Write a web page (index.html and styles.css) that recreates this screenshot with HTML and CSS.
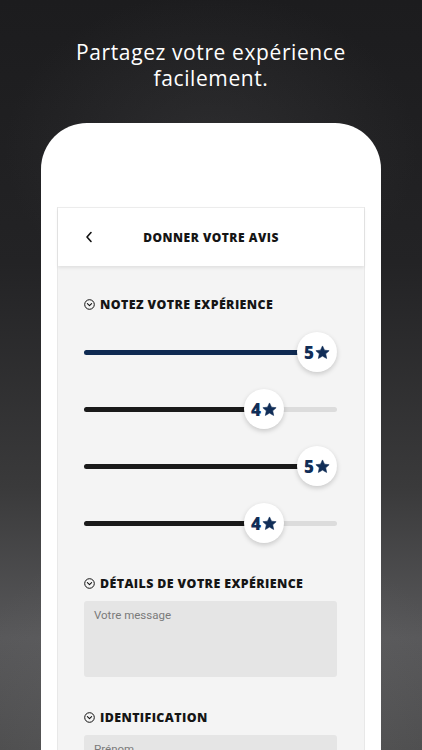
FILE: index.html
```html
<!DOCTYPE html>
<html lang="fr">
<head>
<meta charset="utf-8">
<title>Donner votre avis</title>
<link rel="stylesheet" href="styles.css">
</head>
<body>
<h1 class="tagline">Partagez votre expérience<br>facilement.</h1>
<div class="phone">
  <div class="screen">
    <header class="topbar">
      <svg class="back" width="8" height="12" viewBox="0 0 8 12"><path d="M6 1.5 L2 6 L6 10.5" fill="none" stroke="#111" stroke-width="1.6" stroke-linecap="round" stroke-linejoin="round"/></svg>
      <span class="topbar-title">DONNER VOTRE AVIS</span>
    </header>
    <main class="content">
      <h2 class="section-title first">
        <svg class="sec-icon" width="11" height="11" viewBox="0 0 11 11"><circle cx="5.5" cy="5.5" r="4.8" fill="none" stroke="#111" stroke-width="1"/><path d="M3.4 4.7 L5.5 6.7 L7.6 4.7" fill="none" stroke="#111" stroke-width="1.1" stroke-linecap="round" stroke-linejoin="round"/></svg>
        NOTEZ VOTRE EXPÉRIENCE
      </h2>
      <div class="sliders">
        <div class="slider">
          <div class="track"></div>
          <div class="fill fill-navy" style="width:233px"></div>
          <div class="thumb" style="left:213px"><span class="num">5</span><svg class="star" width="15" height="15" viewBox="0 0 24 24"><path d="M12 1.5 L15.2 8.3 L22.6 9.1 L17.1 14.1 L18.6 21.5 L12 17.7 L5.4 21.5 L6.9 14.1 L1.4 9.1 L8.8 8.3 Z" fill="#102d57" stroke="#102d57" stroke-width="1" stroke-linejoin="round"/></svg></div>
        </div>
        <div class="slider">
          <div class="track"></div>
          <div class="fill" style="width:180px"></div>
          <div class="thumb" style="left:160px"><span class="num">4</span><svg class="star" width="15" height="15" viewBox="0 0 24 24"><path d="M12 1.5 L15.2 8.3 L22.6 9.1 L17.1 14.1 L18.6 21.5 L12 17.7 L5.4 21.5 L6.9 14.1 L1.4 9.1 L8.8 8.3 Z" fill="#102d57" stroke="#102d57" stroke-width="1" stroke-linejoin="round"/></svg></div>
        </div>
        <div class="slider">
          <div class="track"></div>
          <div class="fill" style="width:233px"></div>
          <div class="thumb" style="left:213px"><span class="num">5</span><svg class="star" width="15" height="15" viewBox="0 0 24 24"><path d="M12 1.5 L15.2 8.3 L22.6 9.1 L17.1 14.1 L18.6 21.5 L12 17.7 L5.4 21.5 L6.9 14.1 L1.4 9.1 L8.8 8.3 Z" fill="#102d57" stroke="#102d57" stroke-width="1" stroke-linejoin="round"/></svg></div>
        </div>
        <div class="slider">
          <div class="track"></div>
          <div class="fill" style="width:180px"></div>
          <div class="thumb" style="left:160px"><span class="num">4</span><svg class="star" width="15" height="15" viewBox="0 0 24 24"><path d="M12 1.5 L15.2 8.3 L22.6 9.1 L17.1 14.1 L18.6 21.5 L12 17.7 L5.4 21.5 L6.9 14.1 L1.4 9.1 L8.8 8.3 Z" fill="#102d57" stroke="#102d57" stroke-width="1" stroke-linejoin="round"/></svg></div>
        </div>
      </div>
      <h2 class="section-title">
        <svg class="sec-icon" width="11" height="11" viewBox="0 0 11 11"><circle cx="5.5" cy="5.5" r="4.8" fill="none" stroke="#111" stroke-width="1"/><path d="M3.4 4.7 L5.5 6.7 L7.6 4.7" fill="none" stroke="#111" stroke-width="1.1" stroke-linecap="round" stroke-linejoin="round"/></svg>
        DÉTAILS DE VOTRE EXPÉRIENCE
      </h2>
      <div class="field textarea">Votre message</div>
      <h2 class="section-title">
        <svg class="sec-icon" width="11" height="11" viewBox="0 0 11 11"><circle cx="5.5" cy="5.5" r="4.8" fill="none" stroke="#111" stroke-width="1"/><path d="M3.4 4.7 L5.5 6.7 L7.6 4.7" fill="none" stroke="#111" stroke-width="1.1" stroke-linecap="round" stroke-linejoin="round"/></svg>
        IDENTIFICATION
      </h2>
      <div class="field input">Prénom</div>
    </main>
  </div>
</div>
</body>
</html>
```
FILE: styles.css
```css
html, body {
  margin: 0;
  padding: 0;
}
body {
  width: 422px;
  height: 750px;
  overflow: hidden;
  background:
    radial-gradient(ellipse 90% 45% at 50% 100%, rgba(120,120,120,0.35), rgba(120,120,120,0) 70%),
    radial-gradient(ellipse 70% 30% at 50% 20%, rgba(70,70,72,0.35), rgba(70,70,72,0) 70%),
    linear-gradient(180deg, #1c1c1e 0%, #232325 35%, #3a3a3b 65%, #58585a 85%, #4c4c4d 100%);
  font-family: "Open Sans", "Liberation Sans", sans-serif;
  display: flex;
  flex-direction: column;
  align-items: center;
}
.tagline {
  margin: 39px 0 0;
  color: #ffffff;
  font-family: "Open Sans", sans-serif;
  font-weight: 500;
  font-size: 21px;
  line-height: 26px;
  letter-spacing: 0.6px;
  text-align: center;
}
.phone {
  margin-top: 32px;
  width: 340px;
  flex: 1;
  background: #ffffff;
  border-radius: 46px 46px 0 0;
  padding: 84px 16px 0;
  box-sizing: border-box;
}
.screen {
  height: 100%;
  background: #f4f4f4;
  border-left: 1px solid #e8e8e8;
  border-right: 1px solid #e8e8e8;
  display: flex;
  flex-direction: column;
}
.topbar {
  height: 59px;
  background: #ffffff;
  border-top: 1px solid #ececec;
  box-sizing: border-box;
  box-shadow: 0 2px 3px rgba(0,0,0,0.08);
  display: flex;
  align-items: center;
  position: relative;
  padding-left: 27px;
}
.back {
  display: block;
}
.topbar-title {
  position: absolute;
  left: 0;
  right: 0;
  text-align: center;
  font-weight: 800;
  font-size: 12px;
  letter-spacing: 0.5px;
  color: #151515;
  pointer-events: none;
}
.content {
  padding: 30px 27px 0 26px;
}
.section-title {
  margin: 32px 0 0;
  display: flex;
  align-items: center;
  gap: 5px;
  height: 16px;
  font-size: 12.4px;
  font-weight: 800;
  letter-spacing: 0.4px;
  color: #151515;
}
.section-title.first {
  margin-top: 0;
}
.sec-icon {
  flex: none;
}
.sliders {
  margin-top: 20px;
  display: flex;
  flex-direction: column;
  gap: 17px;
}
.slider {
  position: relative;
  height: 40px;
  width: 253px;
}
.track {
  position: absolute;
  left: 0;
  right: 0;
  top: 18px;
  height: 5px;
  border-radius: 3px;
  background: #dcdcdc;
}
.fill {
  position: absolute;
  left: 0;
  top: 18px;
  height: 5px;
  border-radius: 3px;
  background: #1a1a1a;
}
.fill-navy {
  background: #0f2a52;
}
.thumb {
  position: absolute;
  top: 0;
  width: 40px;
  height: 40px;
  border-radius: 50%;
  background: #ffffff;
  box-shadow: 0 2px 5px rgba(0,0,0,0.18);
  display: flex;
  align-items: center;
  justify-content: center;
  gap: 1px;
}
.num {
  font-family: "Open Sans", sans-serif;
  font-weight: 800;
  font-size: 17px;
  color: #102d57;
  line-height: 1;
}
.star {
  display: block;
}
.field {
  margin-top: 10px;
  width: 253px;
  background: #e5e5e5;
  border-radius: 3px;
  box-sizing: border-box;
  font-family: Roboto, "Liberation Sans", sans-serif;
  font-size: 11.5px;
  color: #7a7a7a;
  padding: 7px 10px;
}
.textarea {
  height: 76px;
}
.input {
  height: 34px;
}
```
